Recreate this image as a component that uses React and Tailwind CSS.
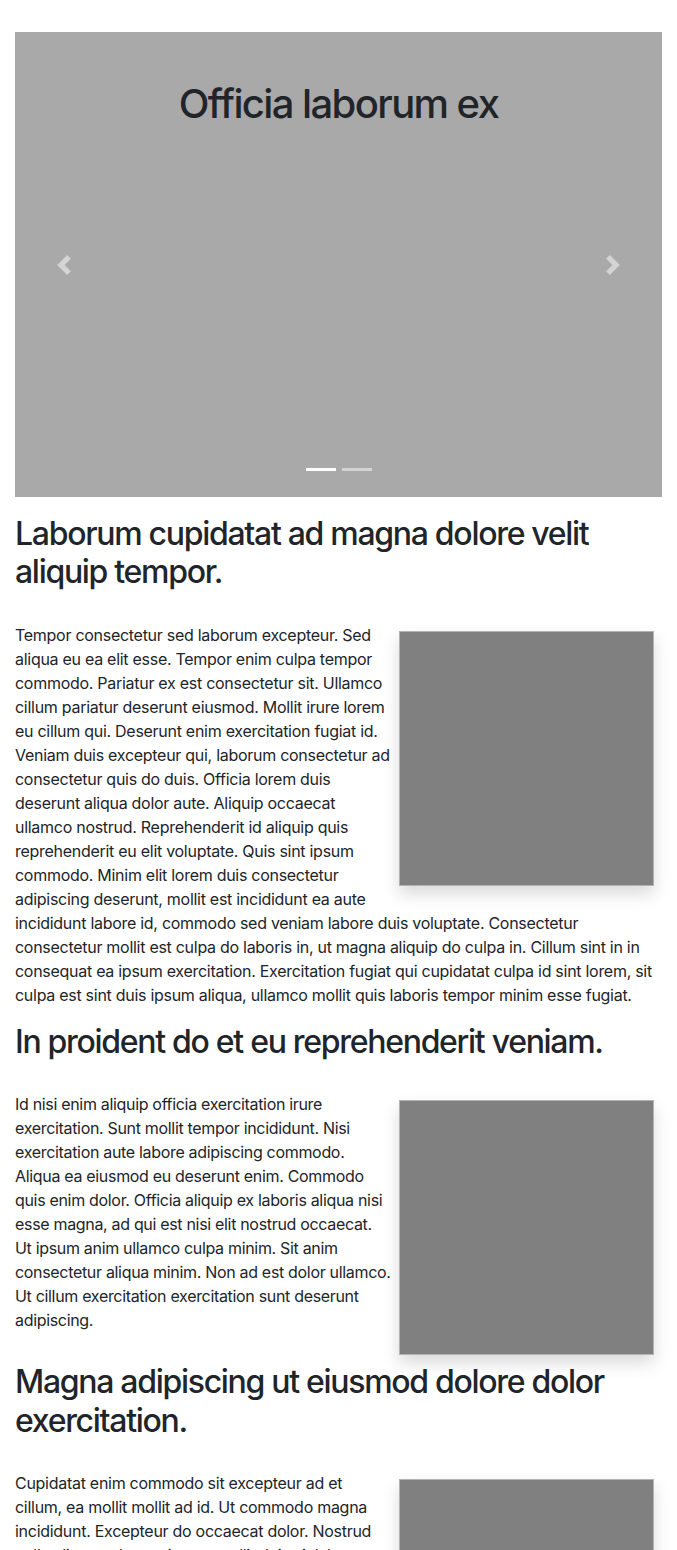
import React from "react";

const sections = [
  {
    title: "Laborum cupidatat ad magna dolore velit aliquip tempor.",
    track: "tracking-[-0.28px]",
    text: "Tempor consectetur sed laborum excepteur. Sed aliqua eu ea elit esse. Tempor enim culpa tempor commodo. Pariatur ex est consectetur sit. Ullamco cillum pariatur deserunt eiusmod. Mollit irure lorem eu cillum qui. Deserunt enim exercitation fugiat id. Veniam duis excepteur qui, laborum consectetur ad consectetur quis do duis. Officia lorem duis deserunt aliqua dolor aute. Aliquip occaecat ullamco nostrud. Reprehenderit id aliquip quis reprehenderit eu elit voluptate. Quis sint ipsum commodo. Minim elit lorem duis consectetur adipiscing deserunt, mollit est incididunt ea aute incididunt labore id, commodo sed veniam labore duis voluptate. Consectetur consectetur mollit est culpa do laboris in, ut magna aliquip do culpa in. Cillum sint in in consequat ea ipsum exercitation. Exercitation fugiat qui cupidatat culpa id sint lorem, sit culpa est sint duis ipsum aliqua, ullamco mollit quis laboris tempor minim esse fugiat.",
  },
  {
    title: "In proident do et eu reprehenderit veniam.",
    track: "tracking-[-0.32px]",
    text: "Id nisi enim aliquip officia exercitation irure exercitation. Sunt mollit tempor incididunt. Nisi exercitation aute labore adipiscing commodo. Aliqua ea eiusmod eu deserunt enim. Commodo quis enim dolor. Officia aliquip ex laboris aliqua nisi esse magna, ad qui est nisi elit nostrud occaecat. Ut ipsum anim ullamco culpa minim. Sit anim consectetur aliqua minim. Non ad est dolor ullamco. Ut cillum exercitation exercitation sunt deserunt adipiscing.",
  },
  {
    title: "Magna adipiscing ut eiusmod dolore dolor exercitation.",
    track: "tracking-[-0.28px]",
    text: "Cupidatat enim commodo sit excepteur ad et cillum, ea mollit mollit ad id. Ut commodo magna incididunt. Excepteur do occaecat dolor. Nostrud nulla aliqua culpa eu ipsum mollit duis sit labore dolore. Velit cillum sint aute irure anim do. Amet lorem ullamco aliqua consequat, ipsum magna esse ex pariatur. Dolor in enim fugiat est laborum.",
  },
];

function Chevron({ dir }) {
  return (
    <svg width="20" height="20" viewBox="0 0 8 8" fill="#fff">
      {dir === "left" ? (
        <path d="M5.25 0l-4 4 4 4 1.5-1.5L4.25 4l2.5-2.5L5.25 0z" />
      ) : (
        <path d="M2.75 0l-1.5 1.5L3.75 4l-2.5 2.5L2.75 8l4-4-4-4z" />
      )}
    </svg>
  );
}

export default function App() {
  return (
    <div
      className="bg-white px-[15px] pt-8 text-[#212529] text-[16px] leading-[24px]"
      style={{ fontFamily: "Inter, 'Noto Sans', sans-serif" }}
    >
      <div className="relative h-[465px] bg-[#a9a9a9]">
        <div className="pt-[48px] text-center text-[40px] leading-[48px] font-medium tracking-[-1.6px] text-[#212529]">
          Officia laborum ex
        </div>
        <div className="absolute left-0 top-0 bottom-0 w-[15%] flex items-center justify-center opacity-50">
          <Chevron dir="left" />
        </div>
        <div className="absolute right-0 top-0 bottom-0 w-[15%] flex items-center justify-center opacity-50">
          <Chevron dir="right" />
        </div>
        <div className="absolute left-0 right-0 bottom-[26px] flex justify-center gap-[6px]">
          <span className="block w-[30px] h-[3px] bg-white" />
          <span className="block w-[30px] h-[3px] bg-white opacity-50" />
        </div>
      </div>

      <div className="pt-[18px]">
        {sections.map((s, i) => (
          <section key={i} className="flow-root">
            <h2 className="text-[32px] leading-[38.4px] font-medium tracking-[-1.3px] mb-[31px]">
              {s.title}
            </h2>
            <div className="float-right m-2 w-[255px] h-[255px] bg-[#808080] border border-[#b3b3b3] shadow-[0_8px_16px_rgba(0,0,0,0.15)]" />
            <p className={"mb-4 " + s.track}>{s.text}</p>
          </section>
        ))}
      </div>
    </div>
  );
}
